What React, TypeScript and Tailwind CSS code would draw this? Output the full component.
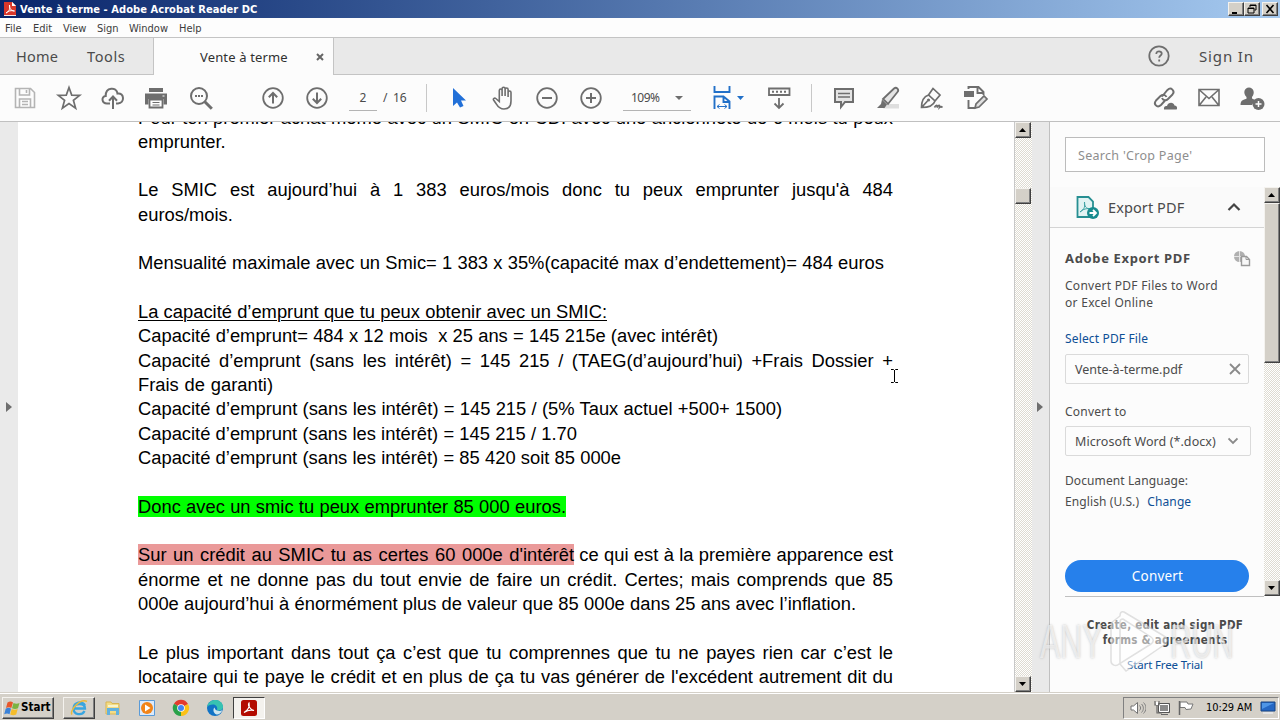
import type { ReactNode } from "react";

const dither =
  "bg-[conic-gradient(#ffffff_25%,#dedbd1_0_50%,#ffffff_0_75%,#dedbd1_0)] bg-[length:2px_2px]";
const bevel =
  "border border-t-[#f4f2ee] border-l-[#f4f2ee] border-b-[#404040] border-r-[#404040] shadow-[inset_-1px_-1px_0_#808080] bg-[#d4d0c8]";

function Svg({ w = 28, h = 28, className = "", children }: { w?: number; h?: number; className?: string; children: ReactNode }) {
  return (
    <svg width={w} height={h} viewBox={`0 0 ${w} ${h}`} fill="none" className={`block shrink-0 ${className}`}>
      {children}
    </svg>
  );
}

function Tool({ className = "w-11", children }: { className?: string; children: ReactNode }) {
  return <div className={`flex h-full shrink-0 items-center justify-center ${className}`}>{children}</div>;
}

function WinButton({ children, className = "" }: { children: ReactNode; className?: string }) {
  return (
    <div className={`flex h-[14px] w-4 items-center justify-center ${bevel} ${className}`}>
      <Svg w={12} h={10}>{children}</Svg>
    </div>
  );
}

function ScrollArrow({ down = false }: { down?: boolean }) {
  return (
    <div className={`flex h-4 w-4 shrink-0 items-center justify-center ${bevel}`}>
      <Svg w={8} h={4}>
        <path d={down ? "M0 0h7L3.5 4z" : "M0 4h7L3.5 0z"} fill="#000" />
      </Svg>
    </div>
  );
}

function TitleBar() {
  return (
    <div className="flex h-[18px] items-center bg-gradient-to-r from-[#0a246a] to-[#a6caf0] pr-[2px] pl-[4px]">
      <Svg w={12} h={14}>
        <path d="M0 0h8l4 4v10H0z" fill="#f5e9e8" />
        <path d="M0 0h8l4 4v9H0z" fill="#d9372b" />
        <path d="M8 0l4 4H8z" fill="#fff" />
        <path d="M2 11c4-2 4-5 3.500-8C5 6 7 9 10.500 9 7 8 4 9 2 11z" stroke="#fff" strokeWidth="1" />
      </Svg>
      <span className="ml-[4px] pt-px font-['DejaVu_Sans_Condensed','DejaVu_Sans',sans-serif] text-[11px] leading-[18px] font-bold tracking-[0.07px] text-white">
        Vente à terme - Adobe Acrobat Reader DC
      </span>
      <div className="ml-auto flex">
        <WinButton><path d="M2 8h5v2H2z" fill="#000" /></WinButton>
        <WinButton>
          <path d="M4 1h6v5H8.500M4 1v2M2 4h6v5H2zM4 1.500h6M2 4.500h6" stroke="#000" />
        </WinButton>
        <WinButton className="ml-[2px]"><path d="M2.500 1l7 8M9.500 1l-7 8" stroke="#000" strokeWidth="1.600" /></WinButton>
      </div>
    </div>
  );
}

function MenuBar() {
  return (
    <div className="flex h-[19px] bg-[#fdfdfd] pt-px pl-[5px] font-['DejaVu_Sans_Condensed','DejaVu_Sans',sans-serif] text-[11px] leading-[19px] text-[#3c3c3c]">
      <span className="w-[28px]">File</span>
      <span className="w-[30px]">Edit</span>
      <span className="w-[34px]">View</span>
      <span className="w-[32px]">Sign</span>
      <span className="w-[50px]">Window</span>
      <span>Help</span>
    </div>
  );
}

function TabBar() {
  return (
    <div className="flex h-[38px] border-t border-[#c4c4c4] bg-[#e9e9e9] font-['Noto_Sans','Open_Sans',sans-serif] text-[#4b4b4b]">
      <div className="flex h-[37px] w-[154px] shrink-0 border-r border-b border-[#c4c4c4] pl-4 text-[14.500px] leading-[36px]">
        <span className="w-[71px] tracking-[0.2px]">Home</span>
        <span className="tracking-[0.6px]">Tools</span>
      </div>
      <div className="flex h-[37px] w-[179px] shrink-0 items-center bg-[#fcfcfc] pl-[46px] text-[#303030]">
        <span className="w-[116px] text-[13px] leading-[36px] tracking-[0.15px]">Vente à terme</span>
        <Svg w={8} h={8}><path d="M1 1l6 6M7 1L1 7" stroke="#666" strokeWidth="2" /></Svg>
      </div>
      <div className="flex h-[37px] flex-1 items-center border-b border-l border-[#c4c4c4]">
        <Svg w={24} h={24} className="ml-[813px]">
          <circle cx="12" cy="12" r="9.700" stroke="#6e6e6e" strokeWidth="1.800" />
          <path d="M9.300 10c0-3.800 5.600-3.300 5.400-.3-.1 1.800-2.500 1.900-2.500 4M12.200 15.500v2" stroke="#6e6e6e" strokeWidth="1.800" />
        </Svg>
        <span className="ml-[28px] text-[15px] leading-[34px] tracking-[0.85px]">Sign In</span>
      </div>
    </div>
  );
}

function Toolbar() {
  return (
    <div className="flex h-[47px] border-b border-[#c0c0c0] bg-[#fcfcfc] pl-[3px] font-['Noto_Sans','Open_Sans',sans-serif] text-[12px] text-[#4b4b4b]">
      <Tool>
        <Svg>
          <path d="M4.500 4.500h15l4 4v15h-19zM8.500 5v6h10V5M15.500 6v3M8.500 23v-8h11v8M11 17.500h6M11 20.500h6" stroke="#b4b4b4" strokeWidth="1.600" />
        </Svg>
      </Tool>
      <Tool>
        <Svg>
          <path d="M14 3.500l2.700 7.600 8 .2-6.300 5 2.200 7.800L14 19.500l-6.600 4.600 2.200-7.800-6.300-5 8-.2z" stroke="#6e6e6e" strokeWidth="1.700" />
        </Svg>
      </Tool>
      <Tool>
        <Svg>
          <path d="M11 19.500H8c-5.500 0-6-7-1.300-7.500C6.500 3 17.500 2.500 18.500 9.500c7-1 7.500 9.500.5 10h-2M14 25V13M10 16.800l4-4.300 4 4.300" stroke="#6e6e6e" strokeWidth="2" />
        </Svg>
      </Tool>
      <Tool className="w-[42px]">
        <Svg>
          <path d="M7 4h14v4H7zM3 9.500h22v11h-3.500V15h-15v5.500H3z" fill="#6e6e6e" />
          <path d="M7.500 15.500h13v8h-13z" fill="#fff" stroke="#6e6e6e" strokeWidth="1.800" />
          <path d="M10.500 18.500h7M10.500 21h7" stroke="#6e6e6e" />
          <path d="M20.500 12h2" stroke="#fff" />
        </Svg>
      </Tool>
      <Tool className="w-[47px]">
        <Svg>
          <circle cx="12" cy="12" r="8" stroke="#6e6e6e" strokeWidth="2" />
          <path d="M17.800 17.800l7 7" stroke="#6e6e6e" strokeWidth="3" />
          <path d="M8 12h2M11 12h2M14 12h2" stroke="#6e6e6e" strokeWidth="1.800" />
        </Svg>
      </Tool>
      <Tool className="ml-[27px] w-[44px]">
        <Svg>
          <circle cx="14" cy="14" r="9.800" stroke="#6e6e6e" strokeWidth="1.800" />
          <path d="M14 19.500V9.500M9.800 13.300L14 9l4.200 4.300" stroke="#6e6e6e" strokeWidth="2" />
        </Svg>
      </Tool>
      <Tool>
        <Svg>
          <circle cx="14" cy="14" r="9.800" stroke="#6e6e6e" strokeWidth="1.800" />
          <path d="M14 8.500v10M9.800 14.700l4.200 4.300 4.200-4.300" stroke="#6e6e6e" strokeWidth="2" />
        </Svg>
      </Tool>
      <div className="mt-[11px] ml-[10px] h-[25px] w-[28px] border-b border-[#b4b4b4] text-center leading-[24px]">2</div>
      <div className="mt-[11px] ml-[6px] w-[43px] leading-[24px] tracking-[-0.2px] whitespace-pre">/  16</div>
      <div className="mt-[9px] h-[28px] w-px bg-[#c8c8c8]" />
      <Tool className="ml-[10px] w-11">
        <Svg><path d="M8 4v18l4-3.500 3 5 3.500-1.500-2.500-5.500h5z" fill="#2270d8" /></Svg>
      </Tool>
      <Tool>
        <Svg>
          <path d="M9.500 15V6.500c0-2 2.800-2 2.800 0V12V4.800c0-2 3-2 3 0V12V5.500c0-2 3-2 3 0V13V8.500c0-2 2.900-2 2.900 0V17c0 5-2.500 8-7 8-5 0-6.500-3-8-5.500L3.800 16c-.8-1.500 1-2.500 2.200-1.500l3.500 3V13" stroke="#6e6e6e" strokeWidth="1.600" transform="translate(.8 0)" />
        </Svg>
      </Tool>
      <Tool>
        <Svg>
          <circle cx="14" cy="14" r="9.800" stroke="#6e6e6e" strokeWidth="1.800" />
          <path d="M9 14h10" stroke="#6e6e6e" strokeWidth="2" />
        </Svg>
      </Tool>
      <Tool>
        <Svg>
          <circle cx="14" cy="14" r="9.800" stroke="#6e6e6e" strokeWidth="1.800" />
          <path d="M9 14h10M14 9v10" stroke="#6e6e6e" strokeWidth="2" />
        </Svg>
      </Tool>
      <div className="mt-[11px] ml-[10px] flex h-[25px] w-[68px] items-center border-b border-[#b4b4b4] pl-[8px]">
        <span className="w-[44px] leading-[24px] tracking-[-0.5px]">109%</span>
        <Svg w={8} h={4}><path d="M0 0h8L4 4z" fill="#6e6e6e" /></Svg>
      </div>
      <Tool className="ml-[22px] w-[31px]">
        <Svg w={31}>
          <path d="M1.500 2v6h15V2M1.500 25V12.500h9l6 5V25M10.500 12v6h6" stroke="#2270c8" strokeWidth="1.900" />
          <path d="M4 22.500h10M6.500 20.500l-2.500 2 2.500 2M11.500 20.500l2.500 2-2.500 2" stroke="#2270c8" />
          <path d="M24 12h7l-3.500 4z" fill="#2270c8" />
        </Svg>
      </Tool>
      <Tool className="ml-[13px] w-11">
        <Svg>
          <path d="M4 4.500h20.500v6.500H4zM14 14v9M9.500 19.500l4.500 4.500 4.500-4.500" stroke="#6e6e6e" strokeWidth="1.800" />
          <path d="M7 7.800h15" stroke="#6e6e6e" strokeWidth="2" strokeDasharray="2 2" />
        </Svg>
      </Tool>
      <div className="mt-[9px] ml-[10px] h-[28px] w-px bg-[#c8c8c8]" />
      <Tool className="ml-[10px] w-11">
        <Svg>
          <path d="M5 5h18v13h-8l-4 5v-5H5z" fill="#e4e4e4" stroke="#6e6e6e" strokeWidth="2" />
          <path d="M8 9.500h12M8 13h12" stroke="#6e6e6e" strokeWidth="1.300" />
        </Svg>
      </Tool>
      <Tool>
        <Svg>
          <path d="M12 20h13v4.500H9z" fill="#dedede" />
          <path d="M9 15L20 4.500c2.500-2 5.500 1 3.500 3.500L14 20z" stroke="#6e6e6e" strokeWidth="1.800" fill="#e4e4e4" />
          <path d="M8 15.500l5 5-2.500 3.500H3l4-4z" fill="#6e6e6e" />
        </Svg>
      </Tool>
      <Tool>
        <Svg>
          <path d="M3.500 23.500c0-7 2.500-11 7-12.500l6.500 6c-1.500 4.500-7 6.500-13.500 6.500zM4 23l5.500-6M10.500 11l4.500-6.500 7 6.500-5 6M16.500 23.500c1.500-3 3-3 2.500 0 1.500-3 3-2.500 2.500 0 1-1 2-1 3 0" stroke="#6e6e6e" strokeWidth="1.700" />
          <circle cx="10.500" cy="16" r="1.600" fill="#6e6e6e" />
        </Svg>
      </Tool>
      <Tool>
        <Svg>
          <path d="M2 7h10v6H2z" fill="#6e6e6e" />
          <path d="M6.500 5V3h10l5 5v3M15.500 3v6h6M6.500 16v8h7" stroke="#6e6e6e" strokeWidth="1.900" />
          <path d="M13 24l1-4 8-8 3 3-8 8z" fill="#e0e0e0" stroke="#6e6e6e" strokeWidth="1.700" />
        </Svg>
      </Tool>
      <Tool className="ml-[143px] w-[46px]">
        <Svg>
          <path d="M12 12.500l5.500-6.500c3.500-3.500 8 1 5 4.500L18 15c-2 2-5 1.500-6-1M15.500 16L11 21c-4 3.500-8-1-5-4.500L10.500 12c2-2 5-1.500 6 1" stroke="#6e6e6e" strokeWidth="1.900" />
          <path d="M14 25.500c-.5-3 1.500-4 3-3.500 1-4 6.500-4.500 7.500-.5 3 0 3 3.500 2 4z" fill="#6e6e6e" />
        </Svg>
      </Tool>
      <Tool className="w-[43px]">
        <Svg>
          <path d="M4 5.500h20v16H4zM4.500 6l9.500 8.500L23.500 6M4.500 21l6.500-8M23.500 21L17 13" stroke="#6e6e6e" strokeWidth="1.600" />
        </Svg>
      </Tool>
      <Tool className="w-[46px]">
        <Svg>
          <path d="M1.500 21c.2-4 1.500-5 6-6.200V13C3.500 9 5.500 3.500 10 3.500S16.500 9 13 13v1.500l3 1.500-3 5z" fill="#6e6e6e" />
          <circle cx="19.500" cy="20" r="6" fill="#6e6e6e" />
          <path d="M16.500 20h6M19.500 17v6" stroke="#fff" strokeWidth="1.500" />
        </Svg>
      </Tool>
    </div>
  );
}

function Line({ w = "w-[755px]", children }: { w?: string; children?: ReactNode }) {
  return (
    <div className={`h-[24.33px] leading-[24.33px] whitespace-nowrap [text-align-last:justify] ${w}`}>{children}</div>
  );
}

function DocumentPage() {
  return (
    <div className="relative h-full w-[996px] shrink-0 overflow-hidden bg-white">
      <div className="-mt-[16.500px] ml-[120px] font-['Liberation_Sans',Arial,sans-serif] text-[18.350px] text-black">
        <Line>Pour ton premier achat même avec un SMIC en CDI avec une ancienneté de 6 mois tu peux</Line>
        <Line w="w-[88px]">emprunter.</Line>
        <Line />
        <Line>Le SMIC est aujourd’hui à 1 383 euros/mois donc tu peux emprunter jusqu'à 484</Line>
        <Line w="w-[95px]">euros/mois.</Line>
        <Line />
        <Line w="w-[746px]">Mensualité maximale avec un Smic= 1 383 x 35%(capacité max d’endettement)= 484 euros</Line>
        <Line />
        <Line w="w-[469px]"><span className="underline decoration-1 underline-offset-2">La capacité d’emprunt que tu peux obtenir avec un SMIC:</span></Line>
        <Line w="w-[580px]">Capacité d’emprunt= 484 x 12 mois &nbsp;x 25 ans = 145 215e (avec intérêt)</Line>
        <Line>Capacité d’emprunt (sans les intérêt) = 145 215 / (TAEG(d’aujourd’hui) +Frais Dossier +</Line>
        <Line w="w-[135px]">Frais de garanti)</Line>
        <Line w="w-[644px]">Capacité d’emprunt (sans les intérêt) = 145 215 / (5% Taux actuel +500+ 1500)</Line>
        <Line w="w-[439px]">Capacité d’emprunt (sans les intérêt) = 145 215 / 1.70</Line>
        <Line w="w-[483px]">Capacité d’emprunt (sans les intérêt) = 85 420 soit 85 000e</Line>
        <Line />
        <Line w="w-[428px]"><span className="bg-[#00ff00]">Donc avec un smic tu peux emprunter 85 000 euros.</span></Line>
        <Line />
        <Line>
          <span className="inline-block w-[436px]"><span className="bg-[#ea9999]">Sur un crédit au SMIC tu as certes 60 000e d'intérêt</span></span> ce qui est à la première apparence est
        </Line>
        <Line>énorme et ne donne pas du tout envie de faire un crédit. Certes; mais comprends que 85</Line>
        <Line w="w-[718px]">000e aujourd’hui à énormément plus de valeur que 85 000e dans 25 ans avec l’inflation.</Line>
        <Line />
        <Line>Le plus important dans tout ça c’est que tu comprennes que tu ne payes rien car c’est le</Line>
        <Line>locataire qui te paye le crédit et en plus de ça tu vas générer de l'excédent autrement dit du</Line>
      </div>
      <Svg w={9} h={16} className="absolute top-[246px] left-[872px]">
        <path d="M1 1.500h2.500l1 1 1-1H8M4.500 2v12M1 14.500h2.500l1-1 1 1H8" stroke="#000" />
      </Svg>
    </div>
  );
}

function SidePanel() {
  return (
    <div className="flex w-[231px] shrink-0 flex-col border-l border-[#c0c0c0] bg-[#fcfcfc] font-['Noto_Sans','Open_Sans',sans-serif] text-[12px] text-[#4b4b4b]">
      <div className="mt-[15px] ml-[15px] h-[35px] w-[200px] shrink-0 border border-[#bcbcbc] bg-white pl-[12px] text-[12.500px] leading-[35px] tracking-[0.3px] text-[#8e8e8e]">
        Search 'Crop Page'
      </div>
      <div className="mt-[15px] flex h-[409px] shrink-0">
        <div className="flex w-[214px] flex-col">
          <div className="flex h-[41px] shrink-0 items-center border-b border-[#d4d4d4] bg-[#fafafa] pl-[26px]">
            <Svg w={24} h={26}>
              <path d="M1.500 3h11l4.500 4.500V23H1.500z" fill="#e2f3f3" stroke="#278f92" strokeWidth="1.800" />
              <path d="M4 18c5-3 5-6 4.500-10C8 12 10 15 15 15c-4-1-8 0-11 3z" stroke="#3aa0a2" />
              <circle cx="17" cy="19" r="6" fill="#178b8e" />
              <path d="M13.500 19h6M17 16l3 3-3 3" stroke="#fff" strokeWidth="1.800" />
            </Svg>
            <span className="ml-[8px] w-[119px] text-[14.500px] leading-[40px] tracking-[0.1px]">Export PDF</span>
            <Svg w={14} h={10}><path d="M1.500 8l5.500-5.500L12.500 8" stroke="#444" strokeWidth="2.200" /></Svg>
          </div>
          <div className="mt-[20px] ml-[15px] flex h-[20px] items-center">
            <span className="w-[168px] text-[13px] font-bold leading-[20px] tracking-[0.65px]">Adobe Export PDF</span>
            <Svg w={18} h={18}>
              <circle cx="6.500" cy="7.500" r="5.500" fill="#b0b0b0" />
              <path d="M1 7.500h11M6.500 2v11" stroke="#e4e4e4" />
              <path d="M8.500 7.500h5l3 3v6h-8z" fill="#f8f8f8" stroke="#9a9a9a" strokeWidth="1.400" />
              <path d="M13 7.500v3h3" stroke="#9a9a9a" />
            </Svg>
          </div>
          <div className="mt-[9px] ml-[15px] leading-[17px] tracking-[0.28px]">Convert PDF Files to Word<br />or Excel Online</div>
          <div className="mt-[19px] ml-[15px] leading-[17px] tracking-[0.15px] text-[#0d4f96]">Select PDF File</div>
          <div className="mt-[7px] ml-[15px] flex h-[30px] w-[184px] shrink-0 items-center rounded-[2px] border border-[#dadada] pl-[9px]">
            <span className="w-[154px] pt-px text-[12.500px] leading-[28px]">Vente-à-terme.pdf</span>
            <Svg w={12} h={12}><path d="M1 1l10 10M11 1L1 11" stroke="#8a8a8a" strokeWidth="1.800" /></Svg>
          </div>
          <div className="mt-[19px] ml-[15px] leading-[17px] tracking-[0.25px]">Convert to</div>
          <div className="mt-[6px] ml-[15px] flex h-[30px] w-[186px] shrink-0 items-center rounded-[2px] border border-[#dadada] pl-[9px]">
            <span className="w-[153px] pt-px text-[12.500px] leading-[30px] tracking-[0.08px]">Microsoft Word (*.docx)</span>
            <Svg w={10} h={8}><path d="M.5 1.500L5 6l4.500-4.500" stroke="#8a8a8a" strokeWidth="1.800" /></Svg>
          </div>
          <div className="mt-[14px] ml-[15px] leading-[21px] tracking-[0.1px]">
            <div>Document Language:</div>
            <div>English (U.S.) <span className="ml-[5px] text-[#0d4f96]">Change</span></div>
          </div>
          <div className="mt-[48px] ml-[15px] h-[32px] w-[184px] shrink-0 rounded-full bg-[#2680eb] pl-px text-center text-[13.500px] leading-[32px] tracking-[0.2px] text-white">
            Convert
          </div>
          <div className="mt-[4px] ml-[15px] h-px shrink-0 bg-[#c0c0c0]" />
        </div>
        <div className={`flex w-4 flex-col ${dither}`}>
          <ScrollArrow />
          <div className={`h-[160px] w-4 ${bevel}`} />
          <div className="flex-1" />
          <ScrollArrow down />
        </div>
      </div>
      <div className="mt-[22px] text-center">
        <div className="font-['DejaVu_Sans_Condensed','DejaVu_Sans',sans-serif] text-[11.500px] leading-[15px] font-bold tracking-[0.28px]">
          Create, edit and sign PDF<br />forms &amp; agreements
        </div>
        <div className="mt-[8px] text-[11.500px] leading-[17px] tracking-[-0.15px] text-[#0d4f96]">Start Free Trial</div>
      </div>
    </div>
  );
}

function Watermark() {
  return (
    <div className="absolute top-[606px] left-[1040px] flex h-[70px] items-center font-['Liberation_Sans',sans-serif] text-[49px] leading-[70px] text-white/60 [text-shadow:0_0_3px_rgba(110,110,110,0.4)]">
      <span className="w-[70px] origin-left scale-x-[0.62]">ANY</span>
      <Svg w={60} h={66}>
        <path d="M1 15v38c0 4 5 6 8 3l32-20c3-2 3-5 0-7L13 11c-2 0-3 1-3 3v42l6 7 38-26c4-3 4-7 0-9L14 4c-3-1-4 1-4 4z" stroke="#c4c4c4" strokeOpacity=".5" strokeWidth="1.500" fill="#fff" fillOpacity=".5" />
      </Svg>
      <span className="w-[66px] origin-left scale-x-[0.6]">RUN</span>
    </div>
  );
}

function Taskbar() {
  return (
    <div className="flex h-[28px] items-center border-t border-[#d4d0c8] bg-[#d4d0c8] pt-[2px] font-['DejaVu_Sans_Condensed','DejaVu_Sans',sans-serif] text-[11px] shadow-[inset_0_1px_0_#ffffff]">
      <div className={`ml-[2px] flex h-[22px] w-[52px] items-center pl-[1px] ${bevel}`}>
        <Svg w={16} h={16}>
          <path d="M3.500 2.500c2-1.500 4-1.500 5.500 0L7.300 8c-1.500-1-3.500-1-5.300 0z" fill="#e8572b" />
          <path d="M9.500 3c2 1 4 1 6 0L14 8.200c-2 1-4 1-6 0z" fill="#7bb342" />
          <path d="M1.700 8.700c2-1.500 3.800-1 5.300 0l-1.500 5.500c-1.500-1-3.300-1-5.300 0z" fill="#3b82d8" />
          <path d="M7.700 9c2 1 4 1 6 0l-1.500 5.500c-2 1-4 1-6 0z" fill="#f5bd2c" />
        </Svg>
        <span className="ml-px pt-px text-[11.500px] font-bold text-black">Start</span>
      </div>
      <div className={`ml-[9px] flex h-[22px] w-[32px] items-center justify-center ${bevel}`}>
        <Svg w={18} h={18}>
          <path d="M15 6.500C12 1.500 4 3 3.500 9.500c0 6.500 8.500 7.500 11 2.500M4 9.500h11c0-2-1-4.500-5.500-4.500S4 8 4 9.500z" stroke="#38a5e0" strokeWidth="2.300" />
          <path d="M2 15.500C-1 12 10-1 17 2.500" stroke="#e9b93c" strokeWidth="1.500" />
        </Svg>
      </div>
      <Svg w={18} h={18} className="ml-[9px]">
        <path d="M2 3h5l1 1.500h7V15H2z" fill="#f3dc86" stroke="#d9b552" />
        <path d="M3 9h12v7h-3v-4H6v4H3z" fill="#62b1df" />
        <path d="M4 6h10v2H4z" fill="#f9f4cc" />
      </Svg>
      <Svg w={18} h={18} className="ml-[16px]">
        <path d="M1.500 1.500h15v15h-15z" fill="#dceafb" stroke="#5a9bd8" />
        <circle cx="9" cy="9" r="6" fill="#f28418" />
        <path d="M7 5.500v7L12.500 9z" fill="#fff" />
      </Svg>
      <Svg w={18} h={18} className="ml-[16px]">
        <path d="M9 9L2 4.800A8 8 0 0 1 16 5z" fill="#e33b2e" />
        <path d="M9 9L16 5a8 8 0 0 1-7 12z" fill="#fbc116" />
        <path d="M9 9v8A8 8 0 0 1 2 4.800z" fill="#29a149" />
        <circle cx="9" cy="9" r="3.800" fill="#fff" />
        <circle cx="9" cy="9" r="3" fill="#4285f4" />
      </Svg>
      <Svg w={18} h={18} className="ml-[16px]">
        <circle cx="9" cy="9" r="8" fill="#1173c5" />
        <path d="M1 8C2 3 6 .8 10 1c4.500.4 7.500 4 7 7.500-.3 2.500-3 3.500-6 2.800C12 8 10 5.500 7 5.500 4 5.500 2 6.500 1 8z" fill="#37c2b1" />
        <path d="M11 11.500c2 .8 4 .5 5.500-.5-1 3-4 5-6 4.500-3-1-4-5-2-7 .2 1 1 2.500 2.500 3z" fill="#cfe6ee" />
      </Svg>
      <div className="ml-[9px] flex h-[22px] w-[32px] items-center justify-center border border-t-[#404040] border-r-[#ffffff] border-b-[#ffffff] border-l-[#404040] bg-[#f4f2ee]">
        <Svg w={16} h={16}>
          <rect width="16" height="16" rx="2.500" fill="#b30b00" />
          <path d="M3 12.500c4-2 6-6 5-9.500-1.500 2 1 7 5 7.500-3-1-7 0-10 2z" stroke="#fff" strokeWidth="1.200" />
        </Svg>
      </div>
      <div className="ml-auto flex h-[22px] w-[156px] items-center border border-t-[#808080] border-r-[#ffffff] border-b-[#ffffff] border-l-[#808080] pl-[6px]">
        <Svg w={16} h={14}>
          <path d="M1 5h2.500L7.500 1.500v11L3.500 9H1z" fill="#fff" stroke="#707070" />
          <path d="M9.500 4.500c1.500 1.500 1.500 3.500 0 5M11.500 3c2.500 2.500 2.500 6 0 8.500M13.500 1.500c3.500 3.500 3 8 0 11" stroke="#808080" />
        </Svg>
        <Svg w={16} h={16} className="ml-[8px]">
          <path d="M4.500 3.500h11v9h-11z" fill="#8a8a8a" stroke="#555" />
          <path d="M5.500 4.500h9v7h-9z" stroke="#fff" />
          <path d="M1 1v4h4V1M3 5v8h5M7 14.500h7" stroke="#666" strokeWidth="1.200" />
          <path d="M2 2h2v3H2z" fill="#fff" />
        </Svg>
        <Svg w={18} h={16} className="ml-[7px]">
          <path d="M3 2h7l1 2h5l-2 5-5 .5-1-2H3z" fill="#fff" stroke="#777" />
          <path d="M2.500 1v14" stroke="#666" strokeWidth="1.500" />
        </Svg>
        <span className="ml-[11px] w-[50px] pt-px whitespace-nowrap tracking-[-0.1px] text-black">10:29 AM</span>
        <Svg w={16} h={16} className="ml-[4px]">
          <path d="M1 2h14v9H1z" fill="#2467c4" stroke="#174583" />
          <path d="M2 3h12L2 9z" fill="#4e95e6" />
          <path d="M3 13h10" stroke="#e4e4e4" strokeWidth="2" />
        </Svg>
      </div>
      <div className="w-[1px]" />
    </div>
  );
}

export default function App() {
  return (
    <div className="relative h-[720px] w-[1280px] overflow-hidden bg-[#fcfcfc]">
      <TitleBar />
      <MenuBar />
      <TabBar />
      <Toolbar />
      <div className="flex h-[570px]">
        <div className="flex w-[18px] shrink-0 items-center bg-[#eaeaea] pl-[6px]">
          <Svg w={7} h={10}><path d="M0 0v10l6-5z" fill="#6e6e6e" /></Svg>
        </div>
        <DocumentPage />
        <div className={`flex w-[18px] shrink-0 flex-col border-l border-[#c8c8c8] ${dither}`}>
          <ScrollArrow />
          <div className={`mt-[50px] h-4 w-4 ${bevel}`} />
          <div className="flex-1" />
          <ScrollArrow down />
        </div>
        <div className="flex w-[17px] shrink-0 items-center bg-[#e9e9e9] pl-[5px]">
          <Svg w={7} h={10}><path d="M0 0v10l6-5z" fill="#6e6e6e" /></Svg>
        </div>
        <SidePanel />
      </div>
      <Taskbar />
      <Watermark />
    </div>
  );
}
